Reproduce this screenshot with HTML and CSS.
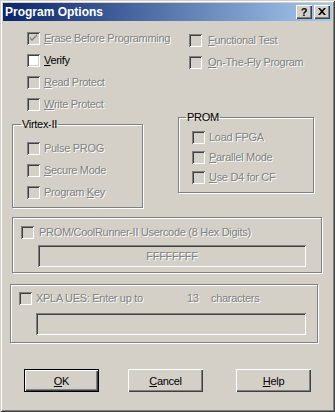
FILE: index.html
```html
<!DOCTYPE html>
<html lang="en">
<head>
    <meta charset="UTF-8">
    <title>Program Options</title>
    <link rel="stylesheet" href="styles.css">
</head>
<body>
<div class="window">
    <div class="titlebar">
        <span class="title">Program Options</span>
        <span class="cap-btn cap-help">?</span>
        <span class="cap-btn cap-close">
            <svg width="8" height="7" viewBox="0 0 8 7"><path d="M0 0h2l2 2.2L6 0h2L5 3.5 8 7H6L4 4.8 2 7H0l3-3.5z" fill="#000"/></svg>
        </span>
    </div>

    <div class="client">
        <div class="top">
            <!-- columna izquierda -->
            <div class="col col-left">
                <div class="check disabled">
                    <span class="box checked"><svg width="13" height="13" viewBox="0 0 13 13"><path d="M3 5v2l2 2 5-5V2L5 7z" fill="#808080"/></svg></span>
                    <span><u>E</u>rase Before Programming</span>
                </div>
                <div class="check">
                    <span class="box"></span>
                    <span><u>V</u>erify</span>
                </div>
                <div class="check disabled">
                    <span class="box"></span>
                    <span><u>R</u>ead Protect</span>
                </div>
                <div class="check disabled">
                    <span class="box"></span>
                    <span><u>W</u>rite Protect</span>
                </div>

                <fieldset class="group virtex">
                    <legend>Virtex-II</legend>
                    <div class="check disabled"><span class="box"></span><span>Pulse PROG</span></div>
                    <div class="check disabled"><span class="box"></span><span><u>S</u>ecure Mode</span></div>
                    <div class="check disabled"><span class="box"></span><span>Program <u>K</u>ey</span></div>
                </fieldset>
            </div>

            <!-- columna derecha -->
            <div class="col col-right">
                <div class="check disabled">
                    <span class="box"></span>
                    <span><u>F</u>unctional Test</span>
                </div>
                <div class="check disabled">
                    <span class="box"></span>
                    <span><u>O</u>n-The-Fly Program</span>
                </div>

                <fieldset class="group prom">
                    <legend>PROM</legend>
                    <div class="check disabled"><span class="box"></span><span>Load FPGA</span></div>
                    <div class="check disabled"><span class="box"></span><span><u>P</u>arallel Mode</span></div>
                    <div class="check disabled"><span class="box"></span><span><u>U</u>se D4 for CF</span></div>
                </fieldset>
            </div>
        </div>

        <div class="frame usercode">
            <div class="check disabled wide">
                <span class="box"></span>
                <span>PROM/CoolRunner-II Usercode (8 Hex Digits)</span>
            </div>
            <div class="edit">FFFFFFFF</div>
        </div>

        <div class="frame xpla">
            <div class="check disabled">
                <span class="box"></span>
                <span class="xpla-label">XPLA UES: Enter up to</span>
                <span class="xpla-count">13</span>
                <span>characters</span>
            </div>
            <div class="edit"></div>
        </div>

        <div class="buttons">
            <button class="btn default"><u>O</u>K</button>
            <button class="btn cancel"><u>C</u>ancel</button>
            <button class="btn help"><u>H</u>elp</button>
        </div>
    </div>
</div>
</body>
</html>
```

FILE: styles.css
```css
* {
    margin: 0;
    padding: 0;
    box-sizing: border-box;
}

body {
    font-family: 'Liberation Sans', Arial, sans-serif;
    font-size: 11px;
    letter-spacing: -0.3px;
    background-color: #d4d0c8;
    color: #000;
    width: 335px;
    height: 412px;
    overflow: hidden;
}

u {
    text-decoration: underline;
    text-underline-offset: 1px;
}

/* Ventana con borde 3D */
.window {
    width: 335px;
    height: 412px;
    padding: 3px;
    background-color: #d4d0c8;
    box-shadow: inset 1px 1px 0 #d4d0c8, inset -1px -1px 0 #404040,
                inset 2px 2px 0 #fff, inset -2px -2px 0 #808080;
}

.titlebar {
    height: 18px;
    display: flex;
    align-items: center;
    padding: 0 2px 0 2px;
    background: linear-gradient(to right, #0a246a, #a6caf0);
}

.title {
    flex: 1;
    color: #fff;
    font-weight: bold;
    font-size: 12px;
    letter-spacing: 0;
}

.cap-btn {
    width: 16px;
    height: 14px;
    display: flex;
    align-items: center;
    justify-content: center;
    background-color: #d4d0c8;
    box-shadow: inset 1px 1px 0 #fff, inset -1px -1px 0 #404040, inset -2px -2px 0 #808080;
    font-weight: bold;
    font-size: 11px;
    letter-spacing: 0;
    padding-bottom: 1px;
}

.cap-help {
    margin-right: 2px;
}

/* Area cliente */
.client {
    display: flex;
    flex-direction: column;
}

.top {
    display: flex;
}

.col {
    display: flex;
    flex-direction: column;
}

.col-left {
    width: 131px;
    margin-left: 9px;
    margin-top: 6px;
}

.col-left > .check {
    padding-left: 15px;
    height: 22px;
}

.col-right {
    width: 136px;
    margin-left: 35px;
    margin-top: 8px;
}

.col-right > .check {
    padding-left: 11px;
    height: 22px;
}

.col-right > .check .box {
    margin-right: 6px;
}

/* Casillas de verificacion */
.check {
    display: flex;
    align-items: center;
    white-space: nowrap;
    height: 14px;
}

.box {
    width: 13px;
    height: 13px;
    flex: none;
    margin-right: 4px;
    background-color: #fff;
    box-shadow: inset 1px 1px 0 #808080, inset -1px -1px 0 #fff,
                inset 2px 2px 0 #404040, inset -2px -2px 0 #d4d0c8;
}

.box svg {
    display: block;
}

.disabled {
    color: #808080;
    text-shadow: 1px 1px 0 #fff;
}

.disabled .box {
    background-color: #d4d0c8;
}

/* Marcos agrupados */
.group {
    border: 1px solid #808080;
    box-shadow: inset 1px 1px 0 #fff, 1px 1px 0 #fff;
}

.group legend {
    line-height: 14px;
    height: 14px;
    padding: 0 1px;
    margin-left: -6px;
    color: #000;
    text-shadow: none;
}

.virtex {
    margin-top: 2px;
    height: 91px;
    padding: 6px 0 0 14px;
}

.virtex .check {
    height: 22px;
}

.prom {
    margin-top: 37px;
    height: 83px;
    padding: 3px 0 0 13px;
}

.prom .check {
    height: 20px;
}

.frame {
    border: 1px solid #808080;
    box-shadow: inset 1px 1px 0 #fff, 1px 1px 0 #fff;
}

.usercode {
    margin: 9px 0 0 9px;
    width: 310px;
    height: 56px;
    padding: 7px 0 0 8px;
}

.usercode .box {
    margin-right: 5px;
}

.xpla {
    margin: 11px 0 0 7px;
    width: 308px;
    height: 59px;
    padding: 6px 0 0 8px;
}

.xpla-label {
    width: 151px;
}

.xpla-count {
    width: 24px;
}

/* Campos de texto */
.edit {
    margin-left: 17px;
    width: 268px;
    height: 22px;
    display: flex;
    align-items: center;
    justify-content: center;
    color: #808080;
    text-shadow: 1px 1px 0 #fff;
    box-shadow: inset 1px 1px 0 #808080, inset -1px -1px 0 #fff,
                inset 2px 2px 0 #404040, inset -2px -2px 0 #d4d0c8;
}

.usercode .edit {
    margin-top: 6px;
}

.xpla .edit {
    margin-top: 8px;
    width: 270px;
}

/* Botones */
.buttons {
    display: flex;
    margin-top: 26px;
}

.btn {
    width: 75px;
    height: 23px;
    border: none;
    background-color: #d4d0c8;
    font-family: 'Liberation Sans', Arial, sans-serif;
    font-size: 11px;
    letter-spacing: -0.3px;
    color: #000;
    box-shadow: inset 1px 1px 0 #fff, inset -1px -1px 0 #404040, inset -2px -2px 0 #808080;
}

.btn.default {
    margin-left: 21px;
    border: 1px solid #000;
    box-shadow: inset 1px 1px 0 #fff, inset -1px -1px 0 #404040, inset -2px -2px 0 #808080;
}

.btn.cancel {
    margin-left: 29px;
}

.btn.help {
    margin-left: 33px;
}
```
